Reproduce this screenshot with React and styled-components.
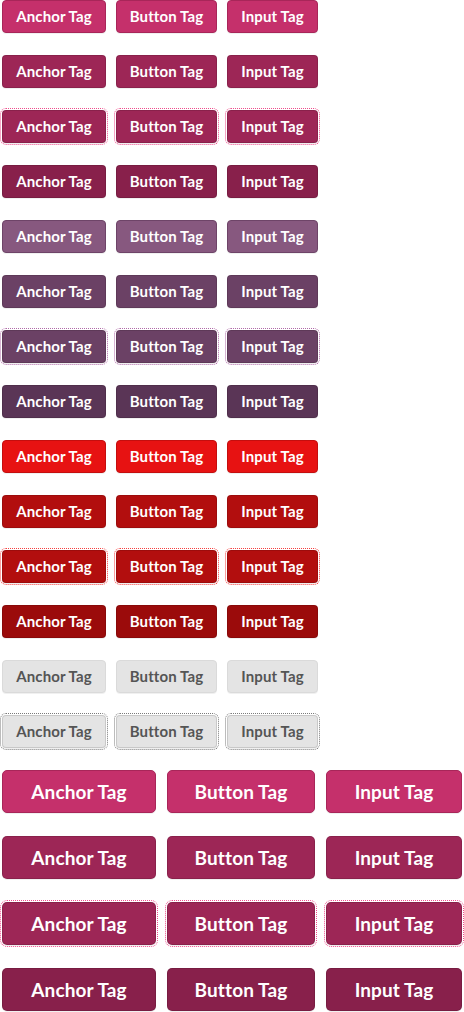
import React from "react";
import styled, { createGlobalStyle, css } from "styled-components";

const palettes = {
    pink: { normal: "#c5306b", hover: "#9d2656", active: "#88204b", border: "#a82659", ring: "#ee4d8c", text: "#ffffff" },
    purple: { normal: "#87587f", hover: "#6b4165", active: "#5a3556", border: "#6e4468", ring: "#b06aa8", text: "#ffffff" },
    red: { normal: "#e71212", hover: "#b20e0e", active: "#9b0b0b", border: "#c40e0e", ring: "#f54040", text: "#ffffff" },
    grey: { normal: "#e4e4e4", hover: "#e4e4e4", active: "#e4e4e4", border: "#dadada", ring: "#7a7a7a", text: "#555555" },
};

const rows = [
    { tone: "pink", state: "normal" },
    { tone: "pink", state: "hover" },
    { tone: "pink", state: "focus" },
    { tone: "pink", state: "active" },
    { tone: "purple", state: "normal" },
    { tone: "purple", state: "hover" },
    { tone: "purple", state: "focus" },
    { tone: "purple", state: "active" },
    { tone: "red", state: "normal" },
    { tone: "red", state: "hover" },
    { tone: "red", state: "focus" },
    { tone: "red", state: "active" },
    { tone: "grey", state: "normal" },
    { tone: "grey", state: "focus" },
];

const largeRows = [
    { tone: "pink", state: "normal" },
    { tone: "pink", state: "hover" },
    { tone: "pink", state: "focus" },
    { tone: "pink", state: "active" },
];

const widths = {
    small: { a: 104, button: 101, input: 91 },
    large: { a: 154, button: 148, input: 136 },
};

export default function App() {
    return (
        <>
            <GlobalStyle />
            <Page>
                {rows.map((r, i) => (
                    <ButtonRow key={i} $size="small">
                        <BtnSet tone={r.tone} state={r.state} size="small" />
                    </ButtonRow>
                ))}
                {largeRows.map((r, i) => (
                    <ButtonRow key={"l" + i} $size="large">
                        <BtnSet tone={r.tone} state={r.state} size="large" />
                    </ButtonRow>
                ))}
            </Page>
        </>
    );
}

function BtnSet({ tone, state, size }) {
    const p = palettes[tone];
    const w = widths[size];
    const common = { $p: p, $state: state, $size: size };
    return (
        <>
            <AnchorBtn href="#" {...common} $w={w.a}>Anchor Tag</AnchorBtn>
            <ButtonBtn type="button" {...common} $w={w.button}>Button Tag</ButtonBtn>
            <InputBtn type="button" value="Input Tag" readOnly {...common} $w={w.input} />
        </>
    );
}

// ===== styled =====
const GlobalStyle = createGlobalStyle`
    body {
        margin: 0;
        background: #ffffff;
        font-family: Lato, "Noto Sans", sans-serif;
    }
`;

const Page = styled.div`
    display: flex;
    flex-direction: column;
    padding: 0 2px;
`;

const ButtonRow = styled.div`
    display: flex;
    gap: ${(p) => (p.$size === "large" ? "11px" : "10px")};
    height: ${(p) => (p.$size === "large" ? "43px" : "33px")};
    margin-bottom: ${(p) => (p.$size === "large" ? "23px" : "22px")};
`;

const btnBase = css`
    box-sizing: border-box;
    display: inline-flex;
    align-items: center;
    justify-content: center;
    width: ${(p) => p.$w}px;
    height: 100%;
    margin: 0;
    padding: 0;
    border: 1px solid ${(p) => (p.$state === "normal" ? p.$p.border : "rgba(0,0,0,0.12)")};
    border-radius: ${(p) => (p.$size === "large" ? "5px" : "4px")};
    background: ${(p) => (p.$state === "focus" ? p.$p.hover : p.$p[p.$state])};
    color: ${(p) => p.$p.text};
    font-family: Lato, "Noto Sans", sans-serif;
    font-weight: 700;
    font-size: ${(p) => (p.$size === "large" ? "19px" : "15px")};
    letter-spacing: 0.1px;
    text-decoration: none;
    text-align: center;
    line-height: 1;
    cursor: pointer;
    box-shadow: 0 1px 0 rgba(0, 0, 0, 0.06);
    ${(p) =>
        p.$state === "focus" &&
        css`
            outline: 1px dotted ${p.$p.ring};
            outline-offset: 1px;
        `}
`;

const AnchorBtn = styled.a`
    ${btnBase}
`;

const ButtonBtn = styled.button`
    ${btnBase}
`;

const InputBtn = styled.input`
    ${btnBase}
`;
